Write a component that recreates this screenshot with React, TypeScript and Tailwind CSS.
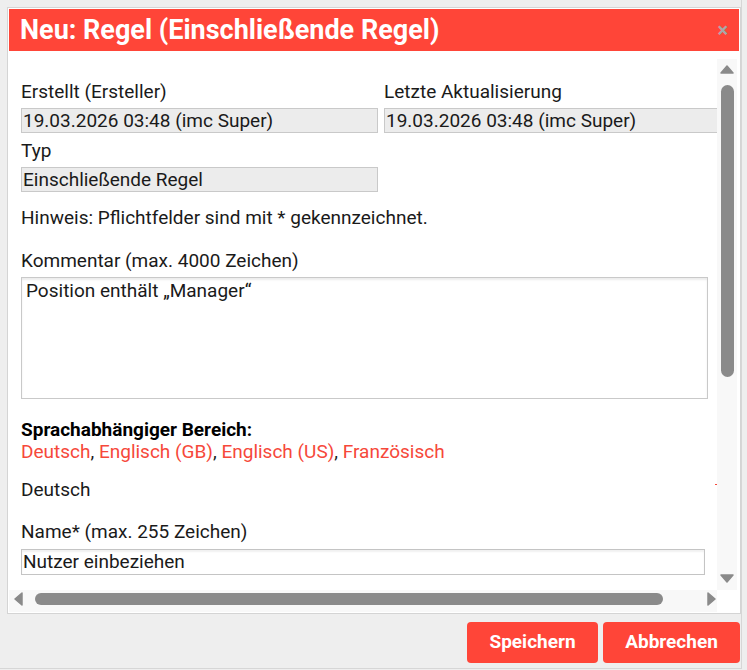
import React from "react";

const font = { fontFamily: "Roboto, 'Liberation Sans', sans-serif" };

function ReadOnly({ value, className = "" }: { value: string; className?: string }) {
  return (
    <div
      className={`h-[25px] border border-[#c9c9c9] bg-[#ececec] pl-[1px] text-[19px] leading-[23px] text-[#1a1a1a] whitespace-nowrap ${className}`}
    >
      {value}
    </div>
  );
}

function Label({ children, className = "" }: { children: React.ReactNode; className?: string }) {
  return <div className={`text-[19px] leading-[20px] text-[#1a1a1a] ${className}`}>{children}</div>;
}

export default function App() {
  return (
    <div className="h-[670px] w-[747px] bg-[#eeeeee]" style={font}>
      <div className="h-[669px] w-[742px] border-r border-b border-[#d6d6d6] pl-[7px] pt-[7px]">
        {/* dialog */}
        <div className="w-[734px] border border-[#d4d4d4] bg-white p-px">
          <div className="flex h-[42px] items-center justify-between bg-[#ff4538] pl-[11px] pr-[11px]">
            <h1 className="text-[27px] font-bold leading-none text-white">Neu: Regel (Einschließende Regel)</h1>
            <span className="text-[20px] font-bold leading-none text-[#a8a8a8]">×</span>
          </div>

          <div className="pt-[8px]">
            <div className="flex h-[531px]">
              {/* scrolling content */}
              <div className="flex-1 overflow-hidden pl-[12px] pt-[23px]">
                <div className="w-[760px]">
                  <div className="grid grid-cols-[357px_357px] gap-x-[6px]">
                    <div>
                      <Label>Erstellt (Ersteller)</Label>
                      <ReadOnly className="mt-[6px]" value="19.03.2026 03:48 (imc Super)" />
                    </div>
                    <div>
                      <Label>Letzte Aktualisierung</Label>
                      <ReadOnly className="mt-[6px]" value="19.03.2026 03:48 (imc Super)" />
                    </div>
                  </div>
                  <Label className="mt-[8px]">Typ</Label>
                  <ReadOnly className="mt-[6px] w-[357px]" value="Einschließende Regel" />

                  <Label className="mt-[16px]">Hinweis: Pflichtfelder sind mit * gekennzeichnet.</Label>

                  <Label className="mt-[23px]">Kommentar (max. 4000 Zeichen)</Label>
                  <div className="mt-[6px] h-[122px] w-[687px] border border-[#c9c9c9] bg-white pl-[4px] pt-[3px] text-[19px] leading-[20px] text-[#1a1a1a] shadow-[inset_0_2px_2px_rgba(0,0,0,0.08)]">
                    Position enthält „Manager“
                  </div>

                  <div className="mt-[21px] text-[19px] font-bold leading-[20px] text-black">Sprachabhängiger Bereich:</div>
                  <div className="mt-[2px] text-[19px] leading-[20px] text-[#1a1a1a]">
                    <span className="text-[#f6483a]">Deutsch</span>,{" "}
                    <span className="text-[#f6483a]">Englisch (GB)</span>,{" "}
                    <span className="text-[#f6483a]">Englisch (US)</span>,{" "}
                    <span className="text-[#f6483a]">Französisch</span>
                  </div>

                  <div className="flex w-[696px] items-start justify-between">
                    <Label className="mt-[18px]">Deutsch</Label>
                    <span className="mt-[22px] block h-px w-[2px] bg-[#f6483a]" />
                  </div>

                  <Label className="mt-[22px]">Name* (max. 255 Zeichen)</Label>
                  <div className="mt-[7px] h-[26px] w-[684px] border border-[#c4c4c4] bg-white pl-[1px] text-[19px] leading-[23px] text-[#1a1a1a] shadow-[inset_0_2px_2px_rgba(0,0,0,0.06)]">
                    Nutzer einbeziehen
                  </div>
                </div>
              </div>

              {/* vertical scrollbar */}
              <div className="mr-[2px] flex w-[20px] flex-col items-center bg-[#f8f8f8]">
                <svg width="14" height="9" viewBox="0 0 14 9" className="mt-[6px]">
                  <path d="M7 1 L13 8 L1 8 Z" fill="#8a8a8a" stroke="#8a8a8a" strokeLinejoin="round" strokeWidth="1.5" />
                </svg>
                <div className="mt-[11px] h-[292px] w-[13px] rounded-full bg-[#8a8a8a]" />
                <div className="flex-1" />
                <svg width="14" height="9" viewBox="0 0 14 9" className="mb-[7px]">
                  <path d="M1 1 L13 1 L7 8 Z" fill="#8a8a8a" stroke="#8a8a8a" strokeLinejoin="round" strokeWidth="1.5" />
                </svg>
              </div>
            </div>

            {/* horizontal scrollbar */}
            <div className="flex h-[22px] w-[708px] items-center bg-[#f8f8f8] pb-[4px]">
              <svg width="9" height="14" viewBox="0 0 9 14" className="ml-[5px]">
                <path d="M8 1 L8 13 L1 7 Z" fill="#8a8a8a" stroke="#8a8a8a" strokeLinejoin="round" strokeWidth="1.5" />
              </svg>
              <div className="ml-[12px] h-[12px] w-[628px] rounded-full bg-[#8a8a8a]" />
              <div className="flex-1" />
              <svg width="9" height="14" viewBox="0 0 9 14" className="mr-[1px]">
                <path d="M1 1 L8 7 L1 13 Z" fill="#8a8a8a" stroke="#8a8a8a" strokeLinejoin="round" strokeWidth="1.5" />
              </svg>
            </div>
          </div>
        </div>

        {/* footer */}
        <div className="mt-[8px] flex justify-end gap-[5px] pr-[1px]">
          <button type="button" className="h-[41px] w-[131px] rounded-[4px] bg-[#ff4538] text-[19px] font-bold text-white">
            Speichern
          </button>
          <button type="button" className="h-[41px] w-[137px] rounded-[4px] bg-[#ff4538] text-[19px] font-bold text-white">
            Abbrechen
          </button>
        </div>
      </div>
    </div>
  );
}
